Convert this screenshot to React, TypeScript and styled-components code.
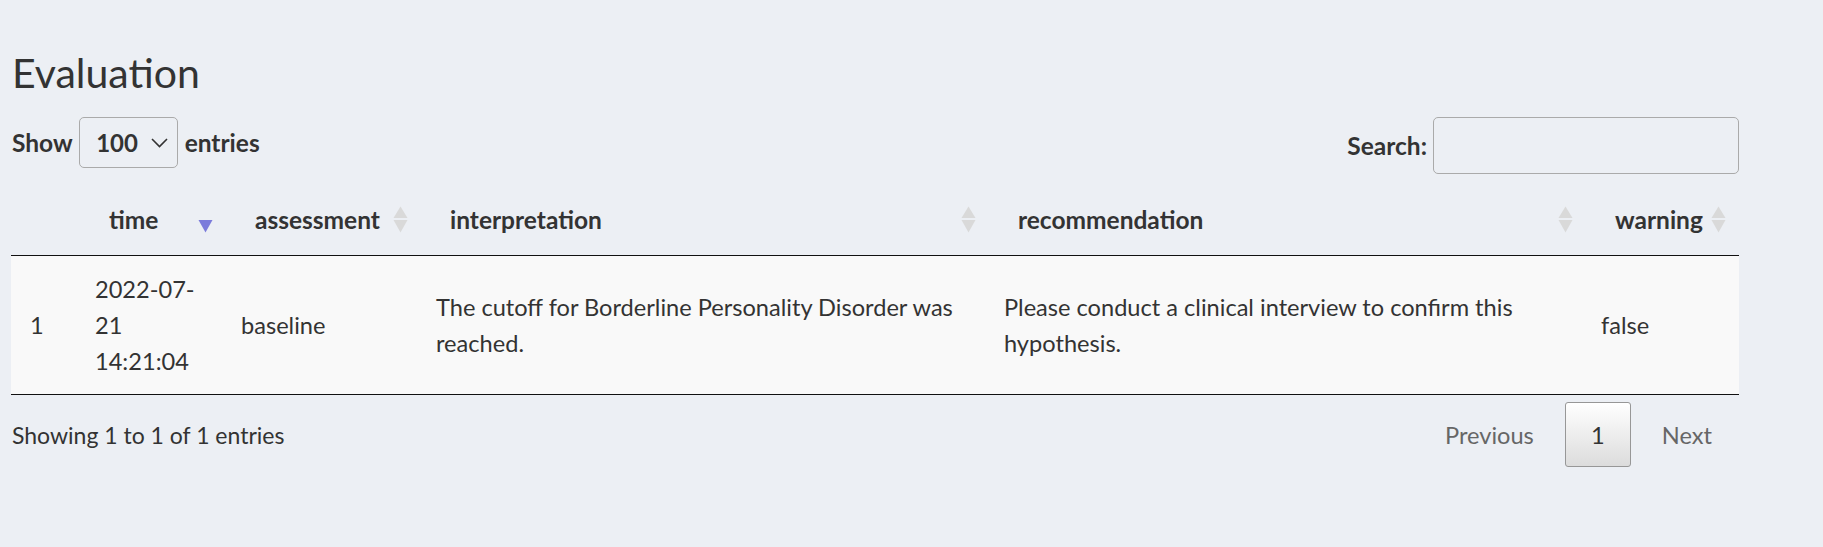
import React from "react";
import styled, { createGlobalStyle } from "styled-components";

const GlobalStyle = createGlobalStyle`
  html, body {
    margin: 0;
    padding: 0;
    background: #eceff4;
  }
  body {
    font-family: "Lato", "Noto Sans", sans-serif;
    color: #333;
    font-size: 23.6px;
    line-height: 36px;
  }
  * { box-sizing: border-box; }
`;

const Page = styled.div`
  width: 1823px;
  height: 547px;
  padding: 48px 0 0 11px;
`;

const Wrapper = styled.div`
  width: 1728px;
`;

const Title = styled.h3`
  margin: 0 0 19px 0;
  padding-left: 1px;
  font-size: 41px;
  font-weight: 400;
  line-height: 50px;
  color: #333;
`;

const Controls = styled.div`
  display: flex;
  justify-content: space-between;
  align-items: flex-start;
`;

const LengthControl = styled.label`
  display: flex;
  align-items: center;
  gap: 6.5px;
  font-weight: 700;
  font-size: 24.5px;
  padding-left: 1px;
`;

const SelectBox = styled.div`
  display: flex;
  align-items: center;
  width: 99px;
  height: 51px;
  padding: 0 9px 0 16px;
  border: 1px solid #aaa;
  border-radius: 5px;
  font-weight: 700;
  font-size: 24px;
`;

const Chevron = styled.svg`
  margin-left: auto;
  display: block;
`;

const FilterControl = styled.label`
  display: flex;
  align-items: center;
  gap: 6px;
  font-weight: 700;
  font-size: 24.5px;
`;

const SearchInput = styled.input`
  width: 306px;
  height: 57px;
  border: 1px solid #aaa;
  border-radius: 5px;
  background: transparent;
  font: inherit;
  outline: none;
`;

const Table = styled.table`
  margin-top: 16px;
  width: 1728px;
  table-layout: fixed;
  border-collapse: collapse;
  border-bottom: 1px solid #111;
`;

const Th = styled.th`
  text-align: left;
  font-weight: 700;
  font-size: 24.5px;
  line-height: 36px;
  padding: 12px 13px 17px 29px;
  border-bottom: 1px solid #111;
  vertical-align: top;
`;

const HeadInner = styled.div`
  display: flex;
  align-items: flex-start;
  white-space: nowrap;
`;

const SortIcon = styled.svg`
  display: block;
  margin-left: auto;
  margin-top: 4px;
  flex-shrink: 0;
`;

const BodyRow = styled.tr`
  background: #f9f9f9;
`;

const Td = styled.td<{ $first?: boolean }>`
  padding: 15px 15px 15px ${(p) => (p.$first ? "19px" : "15px")};
  vertical-align: middle;
  line-height: 36px;
`;

const Footer = styled.div`
  display: flex;
  justify-content: space-between;
  align-items: center;
  margin-top: 7px;
  height: 65px;
`;

const Info = styled.div`
  padding-left: 1px;
  font-size: 23px;
`;

const Paginate = styled.div`
  display: flex;
  align-items: center;
`;

const PageButton = styled.span<{ $current?: boolean }>`
  display: flex;
  align-items: center;
  justify-content: center;
  height: 65px;
  margin-left: 4px;
  padding: 0 27px;
  color: #666;
  ${(p) =>
    p.$current &&
    `
    min-width: 66px;
    padding: 0;
    color: #333;
    border: 1px solid #979797;
    border-radius: 3px;
    background: linear-gradient(to bottom, #ffffff 0%, #dcdcdc 100%);
  `}
`;

type SortState = "none" | "both" | "desc";

const columns: { label: string; width: number; sort: SortState }[] = [
  { label: "", width: 69, sort: "none" },
  { label: "time", width: 146, sort: "desc" },
  { label: "assessment", width: 195, sort: "both" },
  { label: "interpretation", width: 568, sort: "both" },
  { label: "recommendation", width: 597, sort: "both" },
  { label: "warning", width: 153, sort: "both" },
];

const rows = [
  [
    "1",
    "2022-07-21 14:21:04",
    "baseline",
    "The cutoff for Borderline Personality Disorder was reached.",
    "Please conduct a clinical interview to confirm this hypothesis.",
    "false",
  ],
];

function Sort({ state }: { state: SortState }) {
  if (state === "none") return null;
  return (
    <SortIcon width="15" height="27" viewBox="0 0 15 27">
      {state === "both" && <polygon points="0.5,12 7.5,0.5 14.5,12" fill="#d9d9d9" />}
      <polygon
        points="0.5,14 14.5,14 7.5,26.5"
        fill={state === "desc" ? "#7b7bdb" : "#d9d9d9"}
      />
    </SortIcon>
  );
}

export default function App() {
  return (
    <Page>
      <GlobalStyle />
      <Wrapper>
        <Title>Evaluation</Title>
        <Controls>
          <LengthControl>
            Show
            <SelectBox>
              100
              <Chevron width="17" height="10" viewBox="0 0 17 10">
                <polyline
                  points="1,1 8.5,8.5 16,1"
                  fill="none"
                  stroke="#333"
                  strokeWidth="1.6"
                />
              </Chevron>
            </SelectBox>
            entries
          </LengthControl>
          <FilterControl>
            Search:
            <SearchInput type="search" />
          </FilterControl>
        </Controls>
        <Table>
          <colgroup>
            {columns.map((c, i) => (
              <col key={i} style={{ width: c.width }} />
            ))}
          </colgroup>
          <thead>
            <tr>
              {columns.map((c, i) => (
                <Th key={i}>
                  <HeadInner>
                    {c.label}
                    <Sort state={c.sort} />
                  </HeadInner>
                </Th>
              ))}
            </tr>
          </thead>
          <tbody>
            {rows.map((r, i) => (
              <BodyRow key={i}>
                {r.map((cell, j) => (
                  <Td key={j} $first={j === 0}>
                    {cell}
                  </Td>
                ))}
              </BodyRow>
            ))}
          </tbody>
        </Table>
        <Footer>
          <Info>Showing 1 to 1 of 1 entries</Info>
          <Paginate>
            <PageButton>Previous</PageButton>
            <PageButton $current>1</PageButton>
            <PageButton>Next</PageButton>
          </Paginate>
        </Footer>
      </Wrapper>
    </Page>
  );
}
